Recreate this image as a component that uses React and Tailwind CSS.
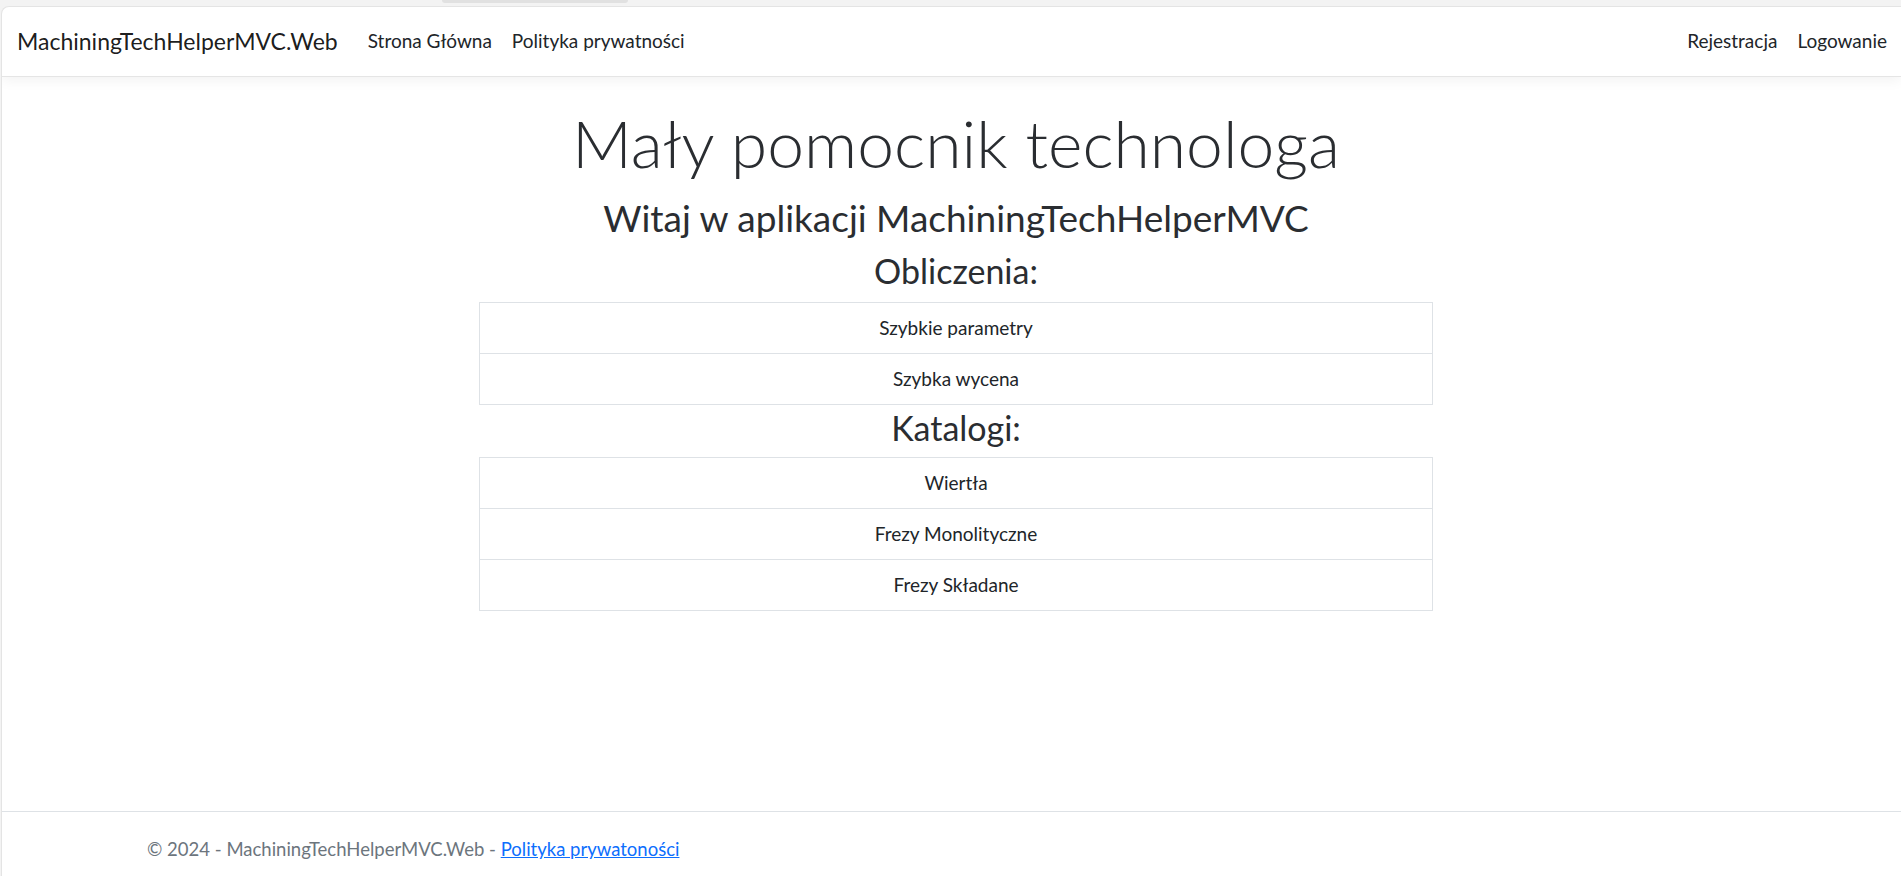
const navLeft = ['Strona Główna', 'Polityka prywatności'];
const navRight = ['Rejestracja', 'Logowanie'];

const calculations = ['Szybkie parametry', 'Szybka wycena'];
const catalogs = ['Wiertła', 'Frezy Monolityczne', 'Frezy Składane'];

const LinkList = ({ items }) => (
  <ul className="border-x border-t border-[#dee2e6] bg-white">
    {items.map((item) => (
      <li
        key={item}
        className="h-[51px] flex items-center justify-center border-b border-[#dee2e6] text-[19px] text-[#212529]"
      >
        {item}
      </li>
    ))}
  </ul>
);

export default function App() {
  return (
    <div className="min-h-screen w-full bg-[#f3f3f3] flex flex-col font-['Lato',sans-serif]">
      {/* browser strip */}
      <div className="h-[6px] flex">
        <div className="ml-[442px] w-[186px] h-[3px] bg-[#e1e1e1] rounded-b-[3px]" />
      </div>

      <div className="flex-1 ml-[1px] flex flex-col bg-white rounded-tl-[8px] border-l border-t border-[#e4e4e4] overflow-hidden">
        {/* Navbar */}
        <header className="h-[70px] flex items-center justify-between pl-[15px] pr-[4px] border-b border-[#e5e5e5] shadow-[0_4px_12px_rgba(0,0,0,0.05)]">
          <div className="flex items-center">
            <span className="text-[23px] text-black/90 mr-[20px]">MachiningTechHelperMVC.Web</span>
            <nav className="flex">
              {navLeft.map((l) => (
                <a key={l} className="px-[10px] text-[19px] text-[#212529]">{l}</a>
              ))}
            </nav>
          </div>
          <nav className="flex">
            {navRight.map((l) => (
              <a key={l} className="px-[10px] text-[19px] text-[#212529]">{l}</a>
            ))}
          </nav>
        </header>

        {/* Main */}
        <main className="flex-1 pl-[477px] pt-[24px]">
          <div className="w-[954px] text-center text-[#2a2d31]">
            <h1 className="text-[66px] leading-[84px] font-light">Mały pomocnik technologa</h1>
            <h3 className="mt-[12px] text-[37px] leading-[42px]">Witaj w aplikacji MachiningTechHelperMVC</h3>
            <h4 className="mt-[14px] text-[34px] leading-[36px]">Obliczenia:</h4>
            <div className="mt-[13px]">
              <LinkList items={calculations} />
            </div>
            <h4 className="mt-[5px] text-[34px] leading-[36px]">Katalogi:</h4>
            <div className="mt-[11px]">
              <LinkList items={catalogs} />
            </div>
          </div>
        </main>

        {/* Footer */}
        <footer className="h-[65px] border-t border-[#dee2e6] pl-[145px] text-[18.5px] leading-[75px] text-[#6c757d]">
          © 2024 - MachiningTechHelperMVC.Web -{' '}
          <a className="text-[#0d6efd] underline">Polityka prywatoności</a>
        </footer>
      </div>
    </div>
  );
}
